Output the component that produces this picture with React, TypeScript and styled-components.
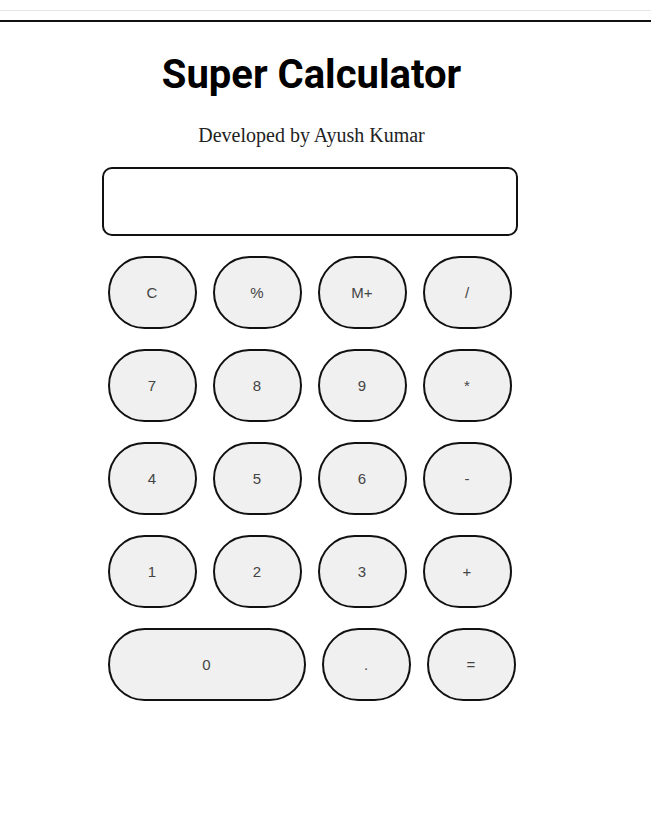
import React, { useState } from 'react';
import styled, { createGlobalStyle } from 'styled-components';

const GlobalStyle = createGlobalStyle`
  html, body {
    margin: 0;
    padding: 0;
    background: #ffffff;
  }
`;

const TopStrip = styled.div`
  height: 10px;
  border-bottom: 1px solid #e6e6e6;
`;

const Page = styled.div`
  margin-top: 9px;
  border-top: 2px solid #111;
  width: 651px;
  min-height: 780px;
`;

const Calculator = styled.div`
  width: 623px;
  display: flex;
  flex-direction: column;
  align-items: center;
  padding-top: 30px;
`;

const Title = styled.h1`
  margin: 0;
  font-family: Roboto, 'Liberation Sans', sans-serif;
  font-weight: 700;
  font-size: 40px;
  line-height: 46px;
  color: #000;
`;

const Subtitle = styled.p`
  margin: 25px 0 0;
  font-family: 'Liberation Serif', serif;
  font-size: 20px;
  line-height: 24px;
  color: #222;
`;

const Display = styled.input`
  box-sizing: border-box;
  margin-top: 20px;
  margin-left: -4px;
  width: 416px;
  height: 69px;
  border: 2px solid #111;
  border-radius: 10px;
  background: #fff;
  font-family: 'Liberation Sans', sans-serif;
  font-size: 28px;
  text-align: right;
  padding: 0 14px;
  outline: none;
`;

const Keypad = styled.div`
  margin-top: 20px;
  display: flex;
  flex-direction: column;
  gap: 20px;
  width: 408px;
`;

const Row = styled.div`
  display: flex;
  gap: 16px;
`;

const Key = styled.button<{ $wide?: boolean }>`
  box-sizing: border-box;
  width: ${(p) => (p.$wide ? '198px' : '89px')};
  height: 73px;
  border: 2px solid #111;
  border-radius: 40px;
  background: #f0f0f0;
  font-family: 'Liberation Sans', Arial, sans-serif;
  font-size: 15px;
  color: #444;
  cursor: pointer;
  padding: 0;
`;

const rows: string[][] = [
  ['C', '%', 'M+', '/'],
  ['7', '8', '9', '*'],
  ['4', '5', '6', '-'],
  ['1', '2', '3', '+'],
  ['0', '.', '='],
];

const App: React.FC = () => {
  const [value, setValue] = useState('');

  const press = (k: string) => {
    if (k === 'C') return setValue('');
    if (k === '=') {
      try {
        // eslint-disable-next-line no-new-func
        setValue(String(Function(`return (${value})`)()));
      } catch {
        setValue('Error');
      }
      return;
    }
    if (k === 'M+' || k === '%') return;
    setValue(value + k);
  };

  return (
    <>
      <GlobalStyle />
      <TopStrip />
      <Page>
        <Calculator>
          <Title>Super Calculator</Title>
          <Subtitle>Developed by Ayush Kumar</Subtitle>
          <Display value={value} readOnly />
          <Keypad>
            {rows.map((row, i) => (
              <Row key={i}>
                {row.map((k) => (
                  <Key key={k} $wide={k === '0'} onClick={() => press(k)}>
                    {k}
                  </Key>
                ))}
              </Row>
            ))}
          </Keypad>
        </Calculator>
      </Page>
    </>
  );
};

export default App;
